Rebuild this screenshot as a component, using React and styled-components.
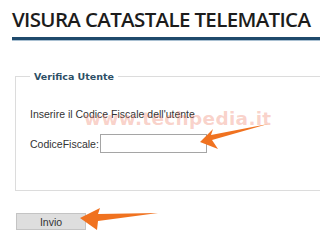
import React from "react";
import styled, { createGlobalStyle } from "styled-components";

const Global = createGlobalStyle`
  html, body { margin: 0; padding: 0; background: #fff; }
  body { width: 320px; height: 242px; overflow: hidden; }
`;

const Page = styled.div`
  position: relative;
  width: 320px;
  height: 242px;
  padding: 6px 0 0 12px;
  box-sizing: border-box;
  overflow: hidden;
  font-family: "Liberation Sans", Arial, sans-serif;
`;

const Title = styled.h1`
  margin: 0;
  font-family: "Open Sans", sans-serif;
  font-weight: 600;
  font-size: 20.5px;
  line-height: 26px;
  letter-spacing: -0.65px;
  color: #1c1c1c;
  white-space: nowrap;
`;

const Rule = styled.div`
  height: 3px;
  margin-top: 5px;
  background: #1f4a6c;
  border-bottom: 1px solid #a9c0d2;
`;

const Fieldset = styled.fieldset`
  margin: 30px -20px 0 3px;
  padding: 16px 14px 30px 14px;
  border: 1px solid #dcdcdc;
  height: 120px;
  box-sizing: border-box;
`;

const Legend = styled.legend`
  margin-left: 0;
  padding: 0 4px;
  font-family: "DejaVu Sans", Verdana, sans-serif;
  font-weight: bold;
  font-size: 9.5px;
  color: #2d4f66;
`;

const Text = styled.div`
  font-size: 10.5px;
  color: #333;
  margin-top: 10px;
`;

const Row = styled.div`
  display: flex;
  align-items: center;
  gap: 1px;
  margin-top: 14px;
  font-size: 10.5px;
  color: #333;
`;

const Input = styled.input`
  width: 107px;
  height: 19px;
  box-sizing: border-box;
  border: 1px solid #a5a5a5;
  background: #fff;
  margin: 0;
  padding: 0 2px;
`;

const Button = styled.button`
  display: block;
  margin: 22px 0 0 4px;
  width: 70px;
  height: 17px;
  background: #dedede;
  border: 1px solid #c4c4c4;
  font-family: "Liberation Sans", Arial, sans-serif;
  font-size: 10.5px;
  color: #333;
  padding: 0;
`;

const Watermark = styled.div`
  position: absolute;
  left: 84px;
  top: 108px;
  font-family: "DejaVu Sans", Verdana, sans-serif;
  font-weight: bold;
  font-size: 18.5px;
  letter-spacing: 0.3px;
  color: rgba(238, 115, 90, 0.32);
  pointer-events: none;
`;

const Overlay = styled.svg`
  position: absolute;
  left: 0;
  top: 0;
  pointer-events: none;
`;

export default function App() {
  return (
    <>
      <Global />
      <Page>
        <Title>VISURA CATASTALE TELEMATICA</Title>
        <Rule />
        <Fieldset>
          <Legend>Verifica Utente</Legend>
          <Text>Inserire il Codice Fiscale dell'utente</Text>
          <Row>
            CodiceFiscale: <Input type="text" />
          </Row>
        </Fieldset>
        <Button>Invio</Button>
        <Watermark>www.techpedia.it</Watermark>
        <Overlay width="320" height="242" viewBox="0 0 320 242">
          <path d="M200 142 L213 129 L211 135 L268 124 L212 140 L218 149 Z" fill="#f07220" />
          <path d="M80 218 L100 208 L98 214 L158 213 L98 221 L97 230 Z" fill="#f07220" />
        </Overlay>
      </Page>
    </>
  );
}
